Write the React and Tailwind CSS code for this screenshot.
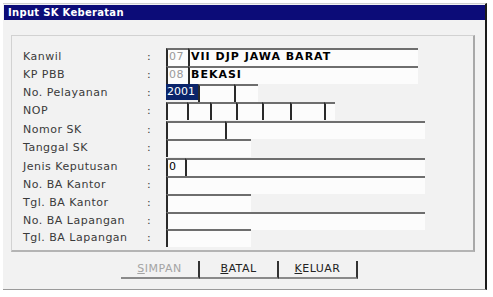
import React from "react";

const font = { fontFamily: '"DejaVu Sans", Verdana, sans-serif' };

function Box({ w, children, cls = "" }) {
  return (
    <div
      className={`h-full shrink-0 border-t-2 border-l-2 border-t-[#6e6e6e] border-l-[#2a2a2a] bg-[#fcfcfc] text-[11px] leading-[14px] pl-[1px] overflow-hidden whitespace-nowrap ${cls}`}
      style={{ width: w }}
    >
      {children}
    </div>
  );
}

const rows = [
  { label: "Kanwil", h: "h-[18px]", field: (
    <>
      <Box w={22} cls="text-[#9a9a9a] tracking-[0.5px]">07</Box>
      <Box w={230} cls="font-bold text-black tracking-[1px]">VII DJP JAWA BARAT</Box>
    </>
  )},
  { label: "KP PBB", h: "h-[18px]", field: (
    <>
      <Box w={22} cls="text-[#9a9a9a] tracking-[0.5px]">08</Box>
      <Box w={230} cls="font-bold text-black tracking-[1px]">BEKASI</Box>
    </>
  )},
  { label: "No. Pelayanan", h: "h-[18px]", field: (
    <>
      <div className="h-[16px] w-[32px] shrink-0 bg-[#0a246a] text-white text-[11px] leading-[16px] pl-[1px]">2001</div>
      <Box w={36} />
      <Box w={24} />
    </>
  )},
  { label: "NOP", h: "h-[19px]", field: (
    <>
      <Box w={21} />
      <Box w={23} />
      <Box w={26} />
      <Box w={26} />
      <Box w={28} />
      <Box w={34} />
      <Box w={11} />
    </>
  )},
  { label: "Nomor SK", h: "h-[18px]", field: (
    <>
      <Box w={59} />
      <Box w={200} />
    </>
  )},
  { label: "Tanggal SK", h: "h-[19px]", field: <Box w={85} /> },
  { label: "Jenis Keputusan", h: "h-[18px]", field: (
    <>
      <Box w={19} cls="text-black">0</Box>
      <Box w={240} />
    </>
  )},
  { label: "No. BA Kantor", h: "h-[18px]", field: <Box w={259} /> },
  { label: "Tgl. BA Kantor", h: "h-[18px]", field: <Box w={85} /> },
  { label: "No. BA Lapangan", h: "h-[17px]", field: <Box w={259} /> },
  { label: "Tgl. BA Lapangan", h: "h-[18px]", field: <Box w={85} /> },
];

function Btn({ children, disabled }) {
  return (
    <div
      className={`w-[79px] h-[18px] flex items-center justify-center border-b-2 border-r-2 border-b-[#8a8a8a] border-r-[#333] text-[11px] tracking-[0.5px] ${disabled ? "text-[#a4a4a4]" : "text-[#222]"}`}
    >
      {children}
    </div>
  );
}

export default function App() {
  return (
    <div className="w-[493px] h-[297px] bg-white" style={font}>
      <div className="pt-[3px] pl-[3px] w-[487px]">
        <div className="w-[484px] h-[287px] border-t border-[#cfcfcf] border-r-2 border-r-[#1a1a1a] border-b border-b-[#9a9a9a] bg-[#f2f2f2] flex flex-col">
          <div className="mt-[1px] ml-[1px] h-[15px] bg-[#0c0c78] text-white font-bold text-[10px] tracking-[0.3px] leading-[15px] pl-[4px]">
            Input SK Keberatan
          </div>
          <div className="ml-[8px] mt-[15px] w-[464px] h-[217px] border border-[#d2d2d2] border-r-2 border-r-[#a8a8a8] border-b-2 border-b-[#b4b4b4] pl-[11px] pt-[12px]">
            {rows.map((r) => (
              <div key={r.label} className={`flex ${r.h}`}>
                <div className="w-[124px] text-[11px] tracking-[0.5px] leading-[17px] text-[#3a3a3a] whitespace-nowrap">{r.label}</div>
                <div className="w-[19px] text-[11px] leading-[17px] text-[#3a3a3a]">:</div>
                <div className="flex h-[18px]">{r.field}</div>
              </div>
            ))}
          </div>
          <div className="flex pl-[118px] mt-[9px]">
            <Btn disabled><span><span className="underline">S</span>IMPAN</span></Btn>
            <Btn><span><span className="underline">B</span>ATAL</span></Btn>
            <Btn><span><span className="underline">K</span>ELUAR</span></Btn>
          </div>
        </div>
      </div>
    </div>
  );
}
